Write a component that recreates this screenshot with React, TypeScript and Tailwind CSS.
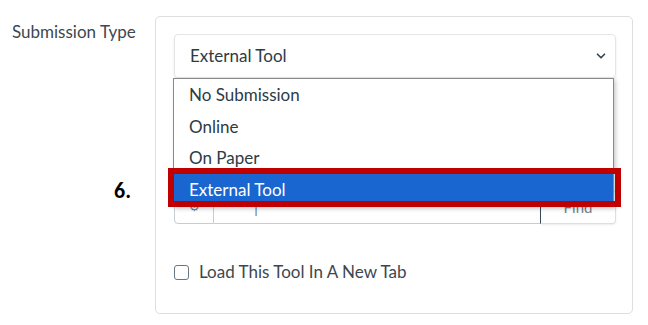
import { ChevronDown } from 'lucide-react'

const font = { fontFamily: 'Lato, "Liberation Sans", sans-serif' }

const OPTIONS = ['No Submission', 'Online', 'On Paper', 'External Tool']

export default function App() {
  return (
    <div
      className="relative w-[648px] h-[325px] bg-white text-[#2d3b45] overflow-hidden"
      style={font}
    >
      <div className="flex pt-4">
        <div className="w-[155px] shrink-0 pl-3 pt-[6px] text-[17px] leading-5 text-[#3d474f]">
          Submission Type
        </div>

        <div className="w-[478px] h-[298px] border border-[#dcdedf] rounded-[5px] pl-[18px] pr-4 pt-[17px]">
          {/* select */}
          <div className="h-[44px] border border-[#e3e5e6] rounded-[4px] shadow-[0_2px_3px_rgba(0,0,0,0.08)] flex items-center justify-between pl-[15px] pr-[7px] text-[17px]">
            <span>External Tool</span>
            <ChevronDown size={14} strokeWidth={3} className="text-[#3d474f]" />
          </div>

          {/* url field */}
          <div className="mt-[112px] flex h-[34px]">
            <div className="w-[40px] border border-[#c7cdd1] rounded-l-[4px] flex items-center justify-center text-[#73818c] text-xs">
              ⚙
            </div>
            <div className="flex-1 border-y border-[#c7cdd1] border-r border-r-[#394b58] flex items-center pl-10 text-[#73818c]">
              |
            </div>
            <div className="w-[75px] border border-l-0 border-[#dcdedf] rounded-r-[4px] flex items-center justify-center text-[#73818c] text-[15px] shadow-[0_1px_2px_rgba(0,0,0,0.08)]">
              Find
            </div>
          </div>

          {/* checkbox */}
          <label className="mt-[36px] flex items-center gap-[10px] text-[17px] leading-6 text-[#3d474f]">
            <span className="w-[15px] h-[15px] border-[1.5px] border-[#6b7780] rounded-[3px] bg-white" />
            Load This Tool In A New Tab
          </label>
        </div>
      </div>

      {/* open option list */}
      <div className="absolute left-[173px] top-[78px] w-[441px] border border-[#8a8a8a] bg-white shadow-[2px_2px_4px_rgba(0,0,0,0.2)] text-[17px]">
        {OPTIONS.map((o, i) => (
          <div
            key={o}
            className={
              i === OPTIONS.length - 1
                ? 'h-[32px] flex items-center pl-[15px] bg-[#1a66d1] text-white'
                : 'h-[31.5px] flex items-center pl-[15px] text-[#2d3b45]'
            }
          >
            {o}
          </div>
        ))}
      </div>

      {/* annotation */}
      <div className="absolute left-[168px] top-[168px] w-[453px] h-[39px] border-[6px] border-[#c00000]" />
      <div
        className="absolute left-[114px] top-[174px] text-[22px] font-bold text-black"
        style={{ fontFamily: 'Carlito, "Liberation Sans", sans-serif' }}
      >
        6.
      </div>
    </div>
  )
}
